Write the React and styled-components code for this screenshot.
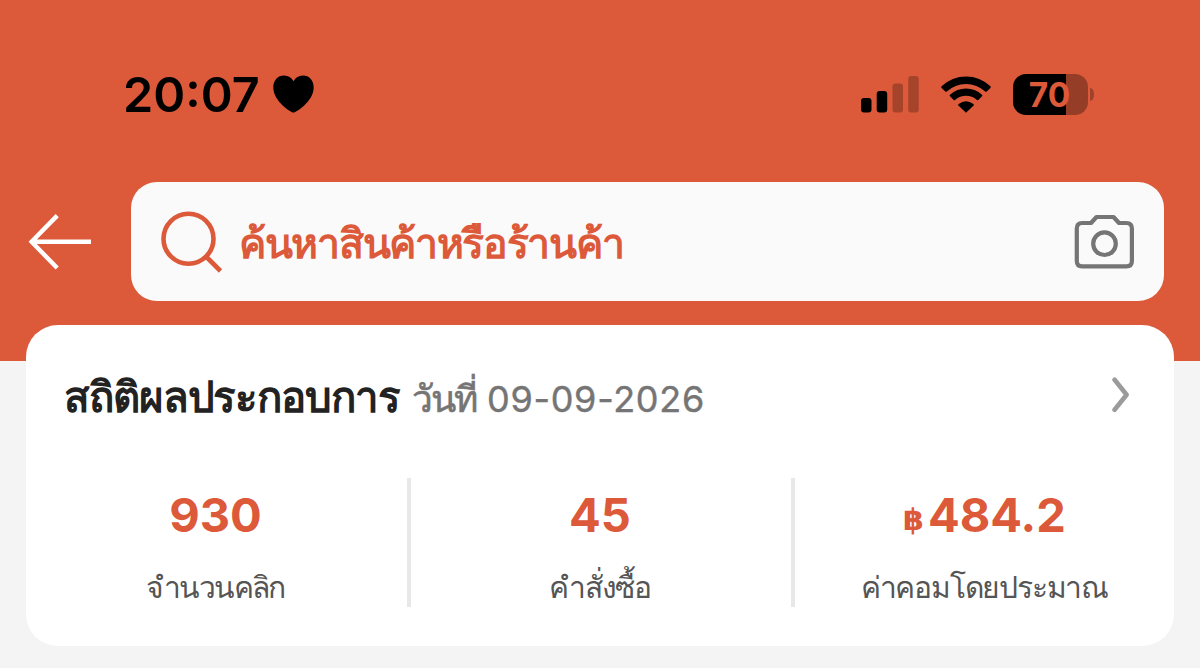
import React from 'react';
import styled, { createGlobalStyle } from 'styled-components';

const stats = [
  { value: '930', label: 'จำนวนคลิก', spacing: '-1.6px' },
  { value: '45', label: 'คำสั่งซื้อ', spacing: '-1.3px' },
  { value: '484.2', currency: '฿', label: 'ค่าคอมโดยประมาณ', spacing: '-1.2px' },
];

const SignalIcon = () => (
  <svg width="58" height="37" viewBox="0 0 58 37">
    <rect x="0" y="22" width="10.5" height="14.5" rx="3" />
    <rect x="15.7" y="15" width="10.5" height="21.5" rx="3" />
    <g opacity="0.24">
      <rect x="31.5" y="7.5" width="10.5" height="29" rx="3" />
      <rect x="47.2" y="0" width="10.5" height="36.5" rx="3" />
    </g>
  </svg>
);

const WifiIcon = () => (
  <svg width="50" height="37" viewBox="0 0 50 37">
    <path d="M25 36.7 L17.4 29.4 Q16.7 28.6 17.6 27.9 Q25 22.4 32.4 27.9 Q33.3 28.6 32.6 29.4 Z" />
    <path d="M9 20.3 Q8.2 19.5 9 18.7 Q16 12.6 25 12.6 Q34 12.6 41 18.7 Q41.8 19.5 41 20.3 L37.3 24 Q36.7 24.6 36 24 Q31 19.8 25 19.8 Q19 19.8 14 24 Q13.3 24.6 12.7 24 Z" />
    <path d="M0.6 11.9 Q-0.2 11.1 0.6 10.3 Q11 0.5 25 0.5 Q39 0.5 49.4 10.3 Q50.2 11.1 49.4 11.9 L45.7 15.5 Q45 16.2 44.2 15.5 Q36 7.9 25 7.9 Q14 7.9 5.8 15.5 Q5 16.2 4.3 15.5 Z" />
  </svg>
);

const HeartIcon = () => (
  <svg width="41" height="38" viewBox="0 0 41 38">
    <path d="M20.5 37.6 C18.6 37.6 0.3 26.5 0.3 12.4 C0.3 5.2 5 0.5 11 0.5 C15.3 0.5 18.5 2.7 20.5 6.3 C22.5 2.7 25.7 0.5 30 0.5 C36 0.5 40.7 5.2 40.7 12.4 C40.7 26.5 22.4 37.6 20.5 37.6 Z" />
  </svg>
);

const BackIcon = () => (
  <svg width="64" height="56" viewBox="0 0 64 56">
    <path
      d="M29.2 1.6 L3.6 27.8 L29.2 54 M4 27.8 H63"
      fill="none"
      stroke="#fff"
      strokeWidth="4.4"
    />
  </svg>
);

const SearchIcon = () => (
  <svg width="62" height="62" viewBox="0 0 62 62">
    <g fill="none" stroke="#dc5939" strokeWidth="4.6">
      <circle cx="27.5" cy="27.8" r="25" />
      <path d="M45 45.5 L59.5 60" />
    </g>
  </svg>
);

const CameraIcon = () => (
  <svg width="60" height="56" viewBox="-0.5 0 60 56">
    <g fill="none" stroke="#757575" strokeWidth="4.2">
      <path
        d="M7.5 9 H16.5 L22 3 H39 L44.5 9 H52 Q57.4 9 57.4 14.6 V47 Q57.4 52.4 52 52.4 H7.7 Q2.3 52.4 2.3 47 V14.6 Q2.3 9 7.5 9 Z"
        strokeLinejoin="round"
      />
      <circle cx="30" cy="29.7" r="11.3" />
    </g>
  </svg>
);

const ChevronIcon = () => (
  <svg width="18" height="36" viewBox="0 0 18 36">
    <path
      d="M2.6 2.8 L14.6 17.8 L2.6 32.8"
      fill="none"
      stroke="#9b9b9b"
      strokeWidth="4.6"
      strokeLinecap="round"
      strokeLinejoin="round"
    />
  </svg>
);

const App = () => (
  <Page>
    <GlobalStyle />
    <Header>
      <StatusBar>
        <Clock>20:07</Clock>
        <HeartIcon />
        <StatusIcons>
          <SignalIcon />
          <WifiIcon />
          <Battery>
            <BatteryBody>70</BatteryBody>
            <BatteryTip />
          </Battery>
        </StatusIcons>
      </StatusBar>
      <SearchRow>
        <BackIcon />
        <SearchBox>
          <SearchIcon />
          <SearchText>ค้นหาสินค้าหรือร้านค้า</SearchText>
          <CameraIcon />
        </SearchBox>
      </SearchRow>
    </Header>
    <Card>
      <CardHeader>
        <CardTitle>สถิติผลประกอบการ</CardTitle>
        <DateLabel>วันที่</DateLabel>
        <DateValue>09-09-2026</DateValue>
        <ChevronIcon />
      </CardHeader>
      <Stats>
        {stats.map(({ value, currency, label, spacing }) => (
          <Stat key={label}>
            <StatValue>
              {currency && <Currency>{currency}</Currency>}
              {value}
            </StatValue>
            <StatLabel $spacing={spacing}>{label}</StatLabel>
          </Stat>
        ))}
      </Stats>
    </Card>
  </Page>
);

const GlobalStyle = createGlobalStyle`
  body {
    margin: 0;
    background: #f4f4f4;
  }

  svg {
    display: block;
    flex-shrink: 0;
  }
`;

const Page = styled.div`
  width: 1200px;
  height: 668px;
  overflow: hidden;
  background: #f4f4f4;
  font-family: Inter, 'Noto Sans', sans-serif;
`;

const Header = styled.div`
  box-sizing: border-box;
  height: 361px;
  padding-top: 64px;
  background: #dc5939;
`;

const StatusBar = styled.div`
  display: flex;
  align-items: center;
  height: 60px;
  padding: 0 106px 0 123px;
`;

const Clock = styled.div`
  width: 150px;
  padding-top: 1px;
  font-size: 48.5px;
  font-weight: 600;
  line-height: 60px;
`;

const StatusIcons = styled.div`
  display: flex;
  align-items: center;
  gap: 22px;
  margin-left: auto;
`;

const Battery = styled.div`
  display: flex;
  align-items: center;
  gap: 2px;
`;

const BatteryBody = styled.div`
  box-sizing: border-box;
  width: 75px;
  height: 41px;
  padding-right: 2px;
  border-radius: 13px;
  background: linear-gradient(to right, #000 53px, #963d28 53px);
  color: #dc5939;
  font-size: 33.5px;
  font-weight: 700;
  line-height: 42px;
  text-align: center;
`;

const BatteryTip = styled.div`
  width: 4px;
  height: 13px;
  border-radius: 0 4px 4px 0 / 0 6px 6px 0;
  background: #9f412b;
`;

const SearchRow = styled.div`
  display: flex;
  align-items: center;
  gap: 39px;
  margin-top: 58px;
  padding: 0 36px 0 28px;
`;

const SearchBox = styled.div`
  display: flex;
  flex: 1;
  align-items: center;
  box-sizing: border-box;
  height: 119px;
  padding: 0 30px;
  border-radius: 26px;
  background: #fafafa;
`;

const SearchText = styled.div`
  flex: 1;
  margin-left: 16px;
  padding-top: 3px;
  color: #dc5939;
  font-size: 41px;
  font-weight: 600;
  line-height: 60px;
  letter-spacing: -1.3px;
  white-space: nowrap;
`;

const Card = styled.div`
  position: relative;
  box-sizing: border-box;
  height: 321px;
  margin: -36px 26px 0;
  padding-top: 40px;
  border-radius: 32px;
  background: #fff;
`;

const CardHeader = styled.div`
  display: flex;
  align-items: center;
  height: 60px;
  padding: 0 44px 0 38px;
  white-space: nowrap;

  svg {
    margin-left: auto;
  }
`;

const CardTitle = styled.div`
  width: 348px;
  padding-top: 4px;
  color: #222;
  font-size: 42px;
  font-weight: 600;
  line-height: 60px;
  letter-spacing: -1.1px;
`;

const DateLabel = styled.div`
  width: 75px;
  padding-top: 7px;
  color: #757575;
  font-size: 37px;
  line-height: 60px;
  letter-spacing: -2px;
  -webkit-text-stroke: 0.6px #757575;
`;

const DateValue = styled.div`
  padding-top: 8px;
  color: #757575;
  font-size: 36px;
  line-height: 60px;
  letter-spacing: 0.7px;
  -webkit-text-stroke: 0.4px #757575;
`;

const Stats = styled.div`
  display: grid;
  grid-template-columns: 385px 384px 1fr;
  margin-top: 53px;
`;

const Stat = styled.div`
  display: flex;
  flex-direction: column;
  align-items: center;
  box-sizing: border-box;
  height: 129px;
  padding-right: 2px;
  border-right: 4px solid #e8e8e8;

  &:last-child {
    padding-right: 0;
    border-right: none;
  }
`;

const StatValue = styled.div`
  height: 60px;
  margin-top: 7px;
  color: #dc5939;
  font-size: 47px;
  font-weight: 700;
  line-height: 60px;
`;

const Currency = styled.span`
  margin-right: 4px;
  font-family: 'DejaVu Sans', sans-serif;
  font-size: 30px;
  line-height: 1;
  vertical-align: 2px;
`;

const StatLabel = styled.div`
  margin-top: 19px;
  color: #555;
  font-size: 30px;
  line-height: 46px;
  letter-spacing: ${({ $spacing }) => $spacing};
  white-space: nowrap;
`;

export default App;
